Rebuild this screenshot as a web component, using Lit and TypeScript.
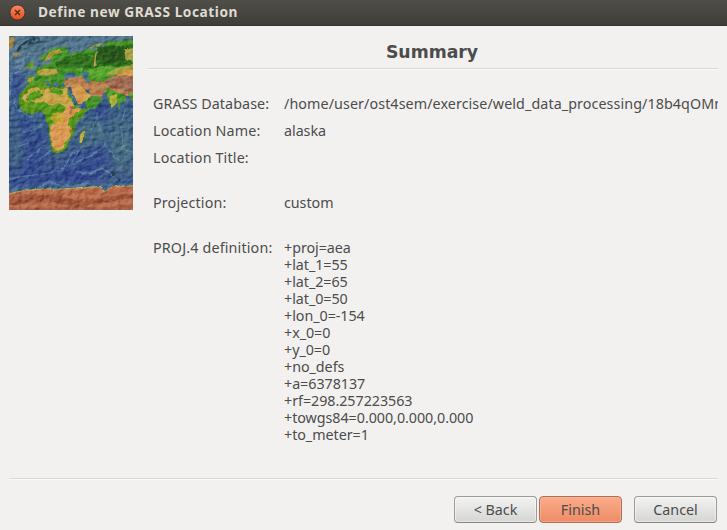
import { LitElement, html, css } from "lit";
import { customElement } from "lit/decorators.js";

@customElement("world-map")
class WorldMap extends LitElement {
  static styles = css`
    :host { display: block; width: 124px; height: 174px; }
    svg { display: block; width: 100%; height: 100%; }
    .shade { mix-blend-mode: soft-light; }
  `;
  render() {
    return html`<svg viewBox="27 18 372 522" preserveAspectRatio="none" aria-label="Relief map">
      <defs>
        <linearGradient id="sea" x1="0" y1="0" x2="0" y2="1">
          <stop offset="0" stop-color="#507289"/><stop offset=".18" stop-color="#54758f"/>
          <stop offset=".32" stop-color="#3f6089"/><stop offset=".5" stop-color="#3b5d88"/>
          <stop offset=".65" stop-color="#416488"/><stop offset=".8" stop-color="#384f8c"/>
          <stop offset=".9" stop-color="#4d7690"/>
        </linearGradient>
        <filter id="relief" x="0" y="0" width="1" height="1" color-interpolation-filters="sRGB">
          <feTurbulence type="fractalNoise" baseFrequency=".05 .07" numOctaves="3" seed="8"/>
          <feColorMatrix values="0 0 0 0 0  0 0 0 0 0  0 0 0 0 0  1 0 0 0 0"/>
          <feDiffuseLighting surfaceScale="5" diffuseConstant=".8" lighting-color="#fff">
            <feDistantLight azimuth="220" elevation="40"/>
          </feDiffuseLighting>
        </filter>
        <filter id="rough" x="-.1" y="-.1" width="1.2" height="1.2" color-interpolation-filters="sRGB">
          <feTurbulence type="fractalNoise" baseFrequency=".07" numOctaves="3" seed="3" result="n"/>
          <feDisplacementMap in="SourceGraphic" in2="n" scale="10" xChannelSelector="R" yChannelSelector="G"/>
          <feGaussianBlur stdDeviation="1.3"/>
        </filter>
        <filter id="soft" color-interpolation-filters="sRGB"><feGaussianBlur stdDeviation="10"/></filter>
        <clipPath id="frame"><rect x="27" y="18" width="372" height="522"/></clipPath>
      </defs>
      <g clip-path="url(#frame)">
        <rect x="27" y="18" width="372" height="522" fill="url(#sea)"/>
        <g filter="url(#soft)">
          <path d="M27 110l45 20-15 60-30 40zM75 258l65 60 10 70-60 50-63-50V300zM230 340l80 0 30 40-100 70-80 0zM285 195l45 40-30 45-30-30zM350 300l49-20v60zM27 430l160-10 120 20-50 20-230 10z" fill="#30448f" opacity=".65"/>
          <path d="M45 40l60-20 25 30-40 20zM30 275l30 20 10 90-30 60M230 270l70 0 20 50-80 50zM330 270h69v170h-60z" fill="#4a7080" opacity=".65"/>
        </g>
        <g fill="none" stroke="#6ba0ab" stroke-linecap="round" opacity=".5" filter="url(#rough)">
          <path d="M88 70C60 95 35 115 33 145c0 30-6 55-6 80M50 95l20-5M45 130l18-10" stroke-width="6"/>
          <path d="M40 200l12 40 40 20M65 310l60-20M85 385l55-45M105 400l55-45M90 300l35-15M55 350l30-12" stroke-width="4"/>
          <path d="M30 448c70-20 120-8 170-38 50-20 80-35 115-60M290 250c0 45 30 60 25 95l45 50" stroke-width="4"/>
          <path d="M222 358l-28 54M245 350l-30 48M270 300l20-30M366 290l2 70 31 5M375 235l-8 35" stroke-width="4"/>
          <path d="M230 425l40 5 35-15 45 25M130 465l20-10 40 15 80-8" stroke-width="6"/>
        </g>
        <path d="M52 60l28-25 20-8-10 15 35-8M95 22l25 5M335 425l25 28" fill="none" stroke="#192e3e" stroke-width="6" opacity=".65" filter="url(#rough)"/>
        <g filter="url(#rough)">
          <path d="M27 22l18 5-5 22-13 8zM38 70l22-5 2 10-20 3z" fill="#a58645"/>
          <path d="M262 55l30-14 17-4-6 9-35 9z" fill="#8c9c3a"/>
          <path d="M80 156l6-18 25-1-8-20 17-6 13-7 20-2 2-14-15-3-16 8-5-11 22-16 30-16 28 3 10 20 26-8 22-7 46 1 13-21 39-5 75-5V200l-27 3-12-20-15 5-8 29-10 15-10-20-9-23-24-4-23 3-12-5 10 17 20 2-18 29-28 7-18-41-3-24-28-5-8-10-18 1-8 16-12-22-12 11 10 17-12-10-10-17-14 0-17 9-6 15z" fill="#439226"/>
          <path d="M163 100l30-20 60-8 28 7 8-22 28-6 80-8v63l-87 4-25 19-60-18-50 1z" fill="#31701f"/>
          <path d="M290 54l48-8 60 12-15 34-52 9-46-14z" fill="#28581b"/>
          <path d="M225 112l50 5 40-10 60 10-30 20-50 10-30-10z" fill="#55a52c"/>
          <path d="M372 58l42-4v44l-37-8zM315 134l30-18 66-14v26z" fill="#a5a142"/>
          <path d="M193 148l25-9 28 0 18 13 34 3 19-3 30-16 62 3v65l-45-13-49-4-12 14-38-5-20-17-30-9-20 3z" fill="#b98050"/>
          <path d="M314 155l28-16 67 0v57l-34-12-47-12z" fill="#a06b53"/>
          <path d="M345 136l35-19 29 1v20zM212 164l27 0 24 24 14 8-15 14-28 14-15-25z" fill="#d49c4c"/>
          <path d="M110 128l20-12 35 0 10 12-15 8-22 2zM128 96l20-28 27-10 21 7-34 8-15 17zM84 145l20-5-9 17-12-3zM280 112l6-44 10-5-8 16-1 30z" fill="#b9a044"/>
          <path d="M315 170l27 13 16 7 20 12 0 10-29 3-12 23-13-28z" fill="#4a9a25"/>
          <path d="M326 200l25-9-3 24-12 22z" fill="#b7b23d"/>
          <path d="M78 112l14-17 7-2 3 19-11 5zM143 157l11 1-2 7zM354 224l7 7-4 6zM382 190l27-5v40z" fill="#61962d"/>
          <path d="M80 168L105 159 138 156 142 166 160 174 172 168 203 174 210 192 228 226 240 236 265 231 260 246 232 274 224 288 223 314 209 328 203 350 192 363 176 370 161 367 152 347 147 315 146 288 138 272 136 254 124 245 104 247 80 251 64 240 56 222 58 195z" fill="#59971b"/>
          <path d="M85 180L109 170 124 180 145 175 200 175 206 199 224 226 206 236 176 219 151 228 112 216 74 215 66 203z" fill="#c9a54b"/>
          <path d="M82 194l13-10 15 8-3 17-26 4zM108 228l22-15 20 14-14 16zM95 187l22-7 10 18-14 8zM154 176l30 0 8 16-24 4-16-10zM140 246l28-7 16 11 1 20-21 16-20-10z" fill="#539b1d"/>
          <path d="M206 224L220 235 244 235 224 256 208 265 202 284 182 274 178 258 196 240zM151 286L175 274 198 280 216 294 212 318 196 338 190 354 174 362 161 356 152 330z" fill="#d99a53"/>
          <path d="M160 250l22-5 14 17-8 14-22 6-14-14z" fill="#cfa633" opacity=".8"/>
          <path d="M210 224l9 8-5 23-9-5z" fill="#bb7050"/>
          <path d="M240 316L246 306 254 302 252 320 246 340 239 338z" fill="#b8ac35"/>
          <path d="M242 126l14-5 10 8-2 17 7 13-11 0-6-15zM190 137l12-10 24 4 12 9-44 6zM258 178l16 15-5 2-15-15z" fill="#466f8d"/>
          <path d="M204 180l8 4 20 34 0 9-8-3z" fill="#3d6d96"/>
        </g>
        <g filter="url(#rough)">
          <path d="M10 498c50-20 105-22 165-20l60-5 68-3 10 14 28-15 80-2v84H10z" fill="#b76b4a" stroke="#c5bb55" stroke-width="2.5"/>
          <path d="M30 506l45-12 110 4 68 20 60-18 86-10v12l-82 14-92 14-80-17-115 12z" fill="#9d553a"/>
        </g>
        <path d="M27 532h372v8H27z" fill="#a46146"/>
        <rect class="shade" x="27" y="18" width="372" height="522" filter="url(#relief)" opacity=".8"/>
      </g>
    </svg>`;
  }
}

interface Row { label: string; lines: string[]; cls: string; }

@customElement("app-root")
class AppRoot extends LitElement {
  static styles = css`
    * { box-sizing: border-box; }
    :host { display: flex; flex-direction: column; height: 530px; overflow: hidden; background: #f2f1f0; color: #4c4c4c; font: 14.3px/17px "Noto Sans", sans-serif; white-space: nowrap; }
    .title { height: 26px; flex: none; display: flex; align-items: center; gap: 12px; padding: 0 0 3px 9px; background: linear-gradient(#504e48, #3e3d39); border-bottom: 1px solid #33322e; color: #dfdbd2; font-weight: 700; font-size: 13.7px; letter-spacing: .55px; }
    .close { width: 17px; height: 17px; display: block; margin-top: 2px; }
    .body { height: 453px; flex: none; display: flex; margin: 0 9px; padding-top: 10px; gap: 15px; border-bottom: 1px solid #d9d8d7; box-shadow: 0 1px #fafafa; }
    .page { flex: 1; min-width: 0; }
    h1 { margin: 0; height: 33px; padding: 7px 2px 0 0; border-bottom: 1px solid #d9d8d7; box-shadow: 0 1px #fafafa; text-align: center; font: bold 17.3px/18px "DejaVu Sans", sans-serif; }
    .rows { padding: 26px 0 0 5px; }
    .row { display: grid; grid-template-columns: 131px minmax(0, 1fr); margin-bottom: 10px; }
    .label { letter-spacing: .16px; }
    .path .label { letter-spacing: .07px; }
    .gap { margin-bottom: 28px; }
    .value { min-height: 17px; letter-spacing: -.04px; }
    .path .value { overflow: hidden; padding-bottom: 4px; margin-bottom: -4px; letter-spacing: .085px; }
    .line { height: 17px; }
    .foot { display: flex; justify-content: flex-end; padding: 17px 10px 0 0; }
    button { width: 83px; height: 27px; margin: 0 0 0 2px; padding: 0 0 1px; border: 1px solid #9c9b99; border-bottom-color: #858482; border-radius: 4px; background: linear-gradient(#f3f3f2, #d5d5d4); box-shadow: inset 0 0 0 1px #ffffff70; color: #4c4c4c; font: inherit; }
    .primary { background: linear-gradient(#fcac8c, #ee8c66); border-color: #a9705a; box-shadow: inset 0 0 0 1px #ffc0a470; }
    .cancel { margin-left: 12px; }
  `;
  rows: Row[] = [
    { label: "GRASS Database:", lines: ["/home/user/ost4sem/exercise/weld_data_processing/18b4qOMm"], cls: "path" },
    { label: "Location Name:", lines: ["alaska"], cls: "" },
    { label: "Location Title:", lines: [""], cls: "gap" },
    { label: "Projection:", lines: ["custom"], cls: "gap" },
    { label: "PROJ.4 definition:", cls: "", lines: ["+proj=aea", "+lat_1=55", "+lat_2=65", "+lat_0=50", "+lon_0=-154", "+x_0=0", "+y_0=0", "+no_defs", "+a=6378137", "+rf=298.257223563", "+towgs84=0.000,0.000,0.000", "+to_meter=1"] },
  ];
  render() {
    return html`
      <div class="title">
        <svg class="close" viewBox="0 0 17 17"><defs><linearGradient id="c" x1="0" y1="0" x2="0" y2="1"><stop stop-color="#f58a62"/><stop offset="1" stop-color="#e64f1e"/></linearGradient></defs>
          <circle cx="8.5" cy="8.5" r="7.6" fill="url(#c)" stroke="#393530"/><path d="M6 6l5 5M11 6l-5 5" stroke="#50291b" stroke-width="1.3"/></svg>
        <span>Define new GRASS Location</span>
      </div>
      <div class="body">
        <world-map></world-map>
        <div class="page">
          <h1>Summary</h1>
          <div class="rows">${this.rows.map(r => html`<div class="row ${r.cls}"><div class="label">${r.label}</div><div class="value">${r.lines.map(l => html`<div class="line">${l}</div>`)}</div></div>`)}</div>
        </div>
      </div>
      <div class="foot"><button>&lt; Back</button><button class="primary">Finish</button><button class="cancel">Cancel</button></div>`;
  }
}
